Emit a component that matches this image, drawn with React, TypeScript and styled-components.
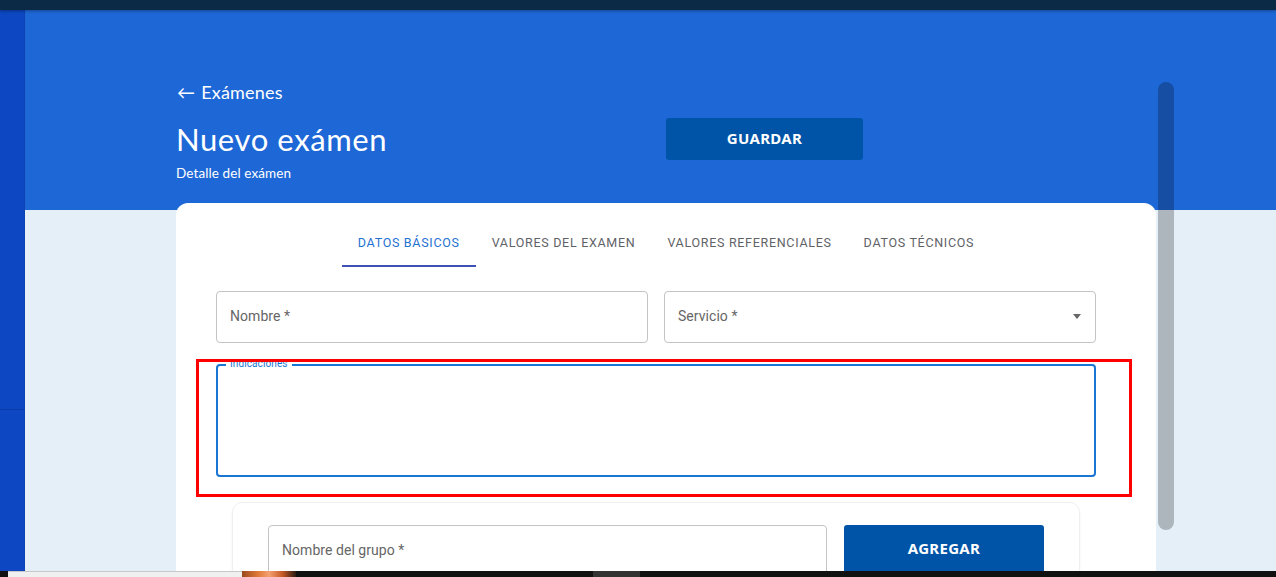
import React from "react";
import styled, { createGlobalStyle } from "styled-components";

const GlobalStyle = createGlobalStyle`
  html, body { margin: 0; padding: 0; overflow: hidden; background: #e4eff7; }
  * { box-sizing: border-box; }
`;

const Shell = styled.div`
  position: relative;
  width: 1276px;
  height: 577px;
  overflow: hidden;
  display: flex;
  flex-direction: column;
  font-family: Roboto, "Liberation Sans", Arial, sans-serif;
`;

const TopBar = styled.div`
  height: 10px;
  flex: none;
  background: #0b2a46;
  box-shadow: 0 1px 3px rgba(0, 0, 0, 0.35);
  position: relative;
  z-index: 2;
`;

const Body = styled.div`
  flex: 1;
  display: flex;
  min-height: 0;
`;

const Sidebar = styled.div`
  width: 25px;
  flex: none;
  background: #0d47c1;
  border-right: 1px solid #0b42b4;
  display: flex;
  flex-direction: column;
`;

const SideDivider = styled.div`
  margin-top: 399px;
  height: 1px;
  background: #0a3ca6;
`;

const Main = styled.div`
  flex: 1;
  background: linear-gradient(#1e67d6 0, #1e67d6 200px, #e4eff7 200px);
  padding-left: 151px;
`;

const Content = styled.div`
  width: 980px;
`;

const Header = styled.div`
  display: flex;
  padding-top: 70px;
  height: 193px;
`;

const HeaderText = styled.div`
  width: 490px;
  flex: none;
  display: flex;
  flex-direction: column;
  color: #ffffff;
  font-family: Lato, "Open Sans", sans-serif;
`;

const BackLink = styled.div`
  font-size: 18px;
  line-height: 24px;
  letter-spacing: 0.2px;
  display: flex;
  align-items: center;
  gap: 6px;
  padding-left: 1px;
`;

const Title = styled.h1`
  margin: 17px 0 0;
  font-size: 31px;
  line-height: 36px;
  font-weight: 400;
  letter-spacing: 0.6px;
`;

const Subtitle = styled.div`
  margin-top: 7px;
  font-size: 13.5px;
  line-height: 18px;
  letter-spacing: 0.1px;
`;

const PrimaryButton = styled.button<{ $w: number; $h: number; $top?: number }>`
  width: ${(p) => p.$w}px;
  height: ${(p) => p.$h}px;
  margin-top: ${(p) => p.$top ?? 0}px;
  border: none;
  border-radius: 3px;
  background: #0054a8;
  color: #ffffff;
  font-family: "Noto Sans", "Open Sans", sans-serif;
  font-weight: 700;
  font-size: 15px;
  line-height: 18px;
  letter-spacing: 0.3px;
  padding: 0 0 2px;
  flex: none;
`;

const Card = styled.div`
  background: #ffffff;
  border-radius: 12px 12px 0 0;
  padding-top: 16px;
  height: 400px;
`;

const Tabs = styled.div`
  display: flex;
  justify-content: center;
  height: 48px;
`;

const Tab = styled.div<{ $active?: boolean }>`
  padding: 0 16px;
  display: flex;
  align-items: center;
  font-size: 12.5px;
  letter-spacing: 0.7px;
  text-transform: uppercase;
  color: ${(p) => (p.$active ? "#1f72d2" : "#5f6368")};
  border-bottom: 2px solid ${(p) => (p.$active ? "#3f51b5" : "transparent")};
`;

const Form = styled.div`
  padding: 24px 60px 0 40px;
  display: flex;
  flex-direction: column;
`;

const Row = styled.div`
  display: flex;
  gap: 16px;
`;

const Field = styled.div<{ $w?: number }>`
  position: relative;
  height: 52px;
  flex: ${(p) => (p.$w ? "none" : "1")};
  width: ${(p) => (p.$w ? `${p.$w}px` : "auto")};
  border: 1px solid #c4c4c4;
  border-radius: 4px;
  display: flex;
  align-items: center;
  padding: 0 13px 2px;
  font-size: 14px;
  color: #666666;
`;

const Label = styled.span`
  flex: 1;
  letter-spacing: 0.05px;
`;

const Highlight = styled.div`
  margin: 16px -36px 0 -20px;
  border: 3px solid #ff0000;
  padding: 2px 33px 17px 17px;
  overflow: hidden;
`;

const TextArea = styled.div`
  position: relative;
  height: 113px;
  border: 2px solid #1976d2;
  border-radius: 4px;
`;

const Notch = styled.span`
  position: absolute;
  left: 8px;
  top: -8px;
  padding: 0 4px;
  background: #ffffff;
  font-size: 10px;
  line-height: 12px;
  color: #1976d2;
  letter-spacing: 0.1px;
`;

const GroupCard = styled.div`
  margin: 5px 16px 0;
  border: 1px solid #f0f0f0;
  border-radius: 10px;
  padding: 22px 36px 0 35px;
  height: 120px;
  display: flex;
  align-items: flex-start;
  gap: 17px;
  box-shadow: 0 1px 3px rgba(0, 0, 0, 0.04);
`;

const Thumb = styled.div`
  position: absolute;
  left: 1158px;
  top: 82px;
  width: 16px;
  height: 448px;
  border-radius: 8px;
  background: rgba(0, 0, 0, 0.24);
  z-index: 3;
`;

const Taskbar = styled.div`
  position: absolute;
  left: 0;
  right: 0;
  bottom: 0;
  height: 6px;
  background: #111111;
  display: flex;
  z-index: 4;
`;

const TaskSearch = styled.div`
  margin-left: 8px;
  width: 234px;
  background: #f0f0f0;
  border-top: 1px solid #c8c8c8;
`;

const TaskIcon = styled.div`
  width: 54px;
  background: linear-gradient(90deg, #9a4a1c, #e07a3a 30%, #f4a071 50%, #c55a25 75%, #2a1a12);
`;

const TaskActive = styled.div`
  margin-left: 297px;
  width: 47px;
  background: #333333;
`;

const Arrow = () => (
  <svg width="10" height="5" viewBox="0 0 10 5">
    <path d="M1 0l4 5 4-5z" fill="#666666" />
  </svg>
);

export default function App() {
  return (
    <>
      <GlobalStyle />
      <Shell>
        <TopBar />
        <Body>
          <Sidebar>
            <SideDivider />
          </Sidebar>
          <Main>
            <Content>
              <Header>
                <HeaderText>
                  <BackLink>
                    <span>←</span>
                    <span>Exámenes</span>
                  </BackLink>
                  <Title>Nuevo exámen</Title>
                  <Subtitle>Detalle del exámen</Subtitle>
                </HeaderText>
                <PrimaryButton $w={197} $h={42} $top={38}>
                  GUARDAR
                </PrimaryButton>
              </Header>
              <Card>
                <Tabs>
                  <Tab $active>Datos básicos</Tab>
                  <Tab>Valores del examen</Tab>
                  <Tab>Valores referenciales</Tab>
                  <Tab>Datos técnicos</Tab>
                </Tabs>
                <Form>
                  <Row>
                    <Field>
                      <Label>Nombre *</Label>
                    </Field>
                    <Field>
                      <Label>Servicio *</Label>
                      <Arrow />
                    </Field>
                  </Row>
                  <Highlight>
                    <TextArea>
                      <Notch>Indicaciones</Notch>
                    </TextArea>
                  </Highlight>
                  <GroupCard>
                    <Field $w={559}>
                      <Label>Nombre del grupo *</Label>
                    </Field>
                    <PrimaryButton $w={200} $h={48}>
                      AGREGAR
                    </PrimaryButton>
                  </GroupCard>
                </Form>
              </Card>
            </Content>
          </Main>
        </Body>
        <Thumb />
        <Taskbar>
          <TaskSearch />
          <TaskIcon />
          <TaskActive />
        </Taskbar>
      </Shell>
    </>
  );
}
